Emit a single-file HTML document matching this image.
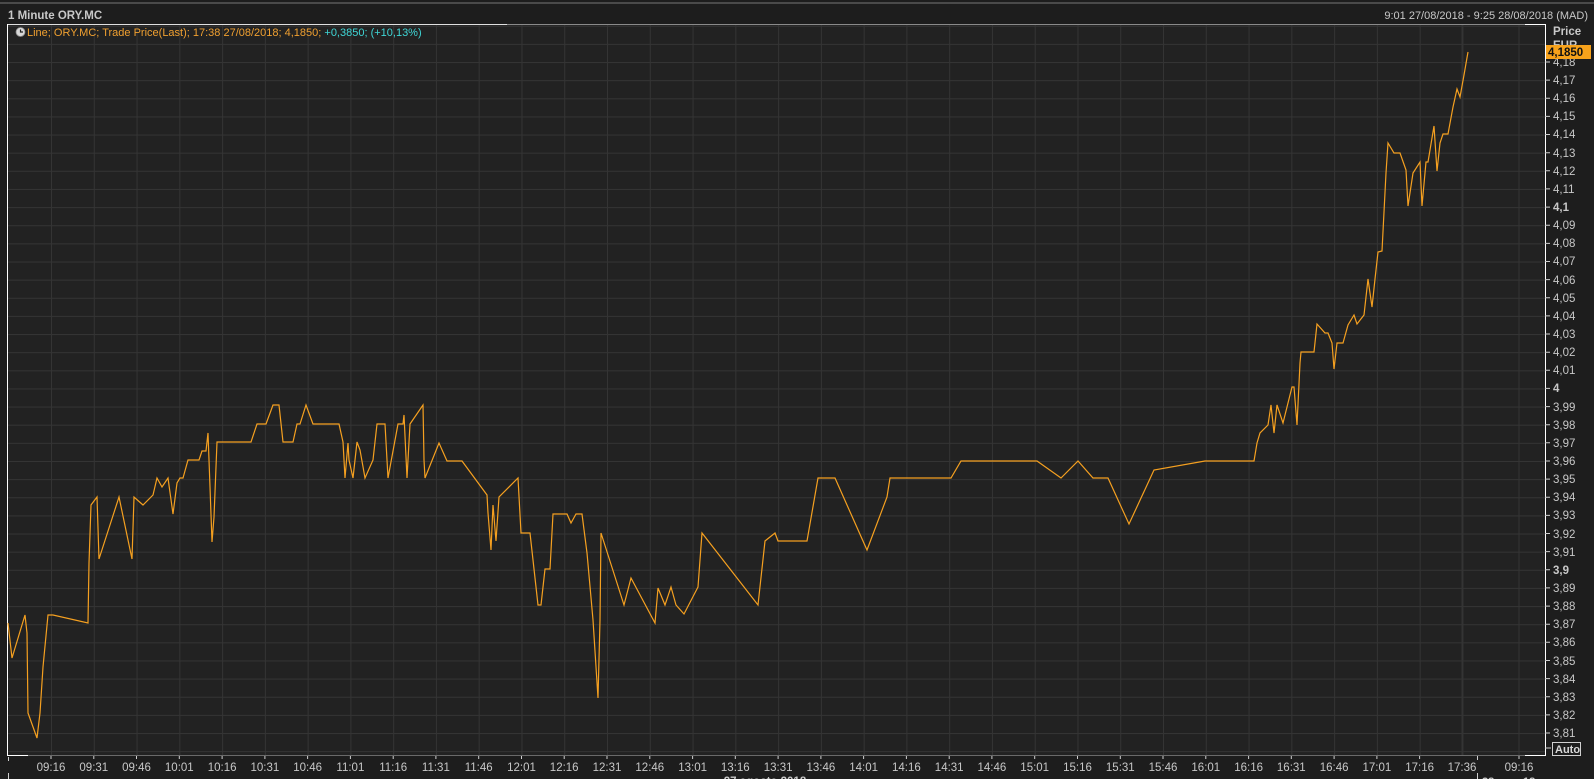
<!DOCTYPE html>
<html><head><meta charset="utf-8"><style>
html,body{margin:0;padding:0;background:#1d1d1d;width:1594px;height:779px;overflow:hidden}
svg{display:block}
text{font-family:"Liberation Sans",sans-serif}
</style></head><body>
<svg width="1594" height="779" viewBox="0 0 1594 779" xmlns="http://www.w3.org/2000/svg">
<defs>
<pattern id="hg" x="0" y="7.6" width="10" height="18.135" patternUnits="userSpaceOnUse"><rect x="0" y="0" width="10" height="1" fill="#343434"/></pattern>
<pattern id="vg" x="8.23" y="0" width="42.77" height="10" patternUnits="userSpaceOnUse"><rect x="0" y="0" width="1" height="10" fill="#343434"/></pattern>
</defs>
<rect x="0" y="0" width="1594" height="779" fill="#1d1d1d"/>
<rect x="0" y="2" width="1594" height="2" fill="#4a4a4a"/>
<rect x="8" y="25" width="1537" height="730" fill="#222222"/>
<rect x="8" y="25" width="1537" height="730" fill="url(#hg)"/>
<rect x="50" y="25" width="1420" height="730" fill="url(#vg)"/>
<rect x="1461.5" y="25" width="1" height="730" fill="#343434"/>
<rect x="1518.5" y="25" width="1" height="730" fill="#343434"/>
<!-- frame -->
<rect x="7" y="24" width="1539" height="1" fill="#8a8a8a"/>
<rect x="7" y="24" width="500" height="1" fill="#e0e0e0"/>
<rect x="1525" y="24" width="21" height="1" fill="#ffffff"/>
<rect x="7" y="24" width="1" height="732" fill="#ffffff"/>
<rect x="8" y="755" width="1537" height="1" fill="#6a6a6a"/>
<rect x="7" y="755" width="21" height="1" fill="#ffffff"/>
<rect x="1525" y="755" width="21" height="1" fill="#ffffff"/>
<rect x="1545" y="24" width="1" height="732" fill="#ffffff"/>
<!-- header -->
<text x="8" y="19" font-size="11.5" font-weight="bold" fill="#c8c8c8">1 Minute ORY.MC</text>
<text x="1588" y="19" font-size="11" fill="#c8c8c8" text-anchor="end">9:01 27/08/2018 - 9:25 28/08/2018 (MAD)</text>
<circle cx="20.5" cy="32" r="4.5" fill="#d8d8d8" stroke="#888" stroke-width="0.8"/>
<path d="M20.5 29.5V32H23" stroke="#222" stroke-width="1.2" fill="none"/>
<text x="27" y="36" font-size="11" fill="#f0a030">Line; ORY.MC; Trade Price(Last);  17:38 27/08/2018;  4,1850; <tspan fill="#3fd6d6">+0,3850;  (+10,13%)</tspan></text>
<!-- price line -->
<polyline fill="none" stroke="#f5a020" stroke-width="1.2" stroke-linejoin="miter" points="8,623 12,658 25,615 27,633 28,713 37,738 40,713 43,667 48,615 53,615 88,623 89,563 91,505 97,497 99,559 119,497 132,559 134,497 143,505 153,495 157,478 162,487 168,478 173,514 177,483 180,478 183,478 188,460 199,460 202,451 206,451 208,433 210,487 212,542 214,517 217,442 251,442 257,424 266,424 273,405 279,405 283,442 293,442 297,424 300,424 306,405 313,424 339,424 343,442 345,478 348,443 349,460 353,478 357,442 360,450 365,478 373,460 377,424 385,424 388,478 398,424 403,424 404,415 407,478 410,424 423,405 424,460 425,478 439,443 447,461 462,461 487,495 488,513 491,550 493,505 496,541 499,497 518,478 521,533 530,533 538,605 541,605 545,569 550,569 553,514 567,514 571,523 576,514 582,514 587,553 593,620 598,698 600,620 601,533 624,605 631,578 655,623 658,588 665,605 671,587 676,605 684,614 698,587 702,533 758,605 765,541 775,533 778,541 807,541 818,478 835,478 867,550 887,497 890,478 951,478 961,461 1037,461 1061,478 1078,461 1093,478 1108,478 1129,524 1154,470 1205,461 1254,461 1257,443 1260,433 1268,425 1271,405 1274,433 1277,405 1283,423 1292,387 1294,387 1297,425 1300,363 1301,352 1314,352 1317,324 1325,333 1328,333 1332,343 1334,369 1337,343 1343,343 1348,325 1354,315 1357,324 1364,315 1368,279 1372,307 1375,279 1378,252 1382,251 1384,212 1386,173 1388,143 1394,153 1400,153 1406,170 1408,206 1413,173 1420,162 1422,206 1426,162 1428,162 1434,126 1437,171 1440,143 1443,134 1448,134 1453,107 1457,89 1460,97 1464,75 1468,52"/>
<!-- right axis -->
<g font-size="11" fill="#c8c8c8">
<text x="1553" y="35" font-weight="bold" font-size="11.5">Price</text>
<text x="1553" y="49" font-weight="bold" font-size="11.5">EUR</text>
</g>
<g stroke="#cfcfcf" stroke-width="1">
<path d="M1545 62h5M1545 80.1h5M1545 98.3h5M1545 116.4h5M1545 134.5h5M1545 152.7h5M1545 170.8h5M1545 188.9h5M1545 207.1h5M1545 225.2h5M1545 243.4h5M1545 261.5h5M1545 279.6h5M1545 297.8h5M1545 315.9h5M1545 334h5M1545 352.2h5M1545 370.3h5M1545 388.4h5M1545 406.6h5M1545 424.7h5M1545 442.8h5M1545 461h5M1545 479.1h5M1545 497.2h5M1545 515.4h5M1545 533.5h5M1545 551.6h5M1545 569.8h5M1545 587.9h5M1545 606.1h5M1545 624.2h5M1545 642.3h5M1545 660.5h5M1545 678.6h5M1545 696.7h5M1545 714.9h5M1545 733h5M1545 748h6"/>
</g>
<g font-size="11.5" fill="#c8c8c8">
<text x="1553" y="66">4,18</text><text x="1553" y="84">4,17</text><text x="1553" y="102">4,16</text><text x="1553" y="120">4,15</text><text x="1553" y="138">4,14</text><text x="1553" y="157">4,13</text><text x="1553" y="175">4,12</text><text x="1553" y="193">4,11</text><text x="1553" y="211" font-weight="bold">4,1</text><text x="1553" y="229">4,09</text><text x="1553" y="247">4,08</text><text x="1553" y="265">4,07</text><text x="1553" y="284">4,06</text><text x="1553" y="302">4,05</text><text x="1553" y="320">4,04</text><text x="1553" y="338">4,03</text><text x="1553" y="356">4,02</text><text x="1553" y="374">4,01</text><text x="1553" y="392" font-weight="bold">4</text><text x="1553" y="411">3,99</text><text x="1553" y="429">3,98</text><text x="1553" y="447">3,97</text><text x="1553" y="465">3,96</text><text x="1553" y="483">3,95</text><text x="1553" y="501">3,94</text><text x="1553" y="519">3,93</text><text x="1553" y="538">3,92</text><text x="1553" y="556">3,91</text><text x="1553" y="574" font-weight="bold">3,9</text><text x="1553" y="592">3,89</text><text x="1553" y="610">3,88</text><text x="1553" y="628">3,87</text><text x="1553" y="646">3,86</text><text x="1553" y="665">3,85</text><text x="1553" y="683">3,84</text><text x="1553" y="701">3,83</text><text x="1553" y="719">3,82</text><text x="1553" y="737">3,81</text>
</g>
<rect x="1546" y="45" width="45" height="14" fill="#f7a21b"/>
<text x="1548" y="56" font-size="11.5" font-weight="bold" fill="#111">4,1850</text>
<rect x="1552.5" y="742.5" width="28" height="13" fill="#1d1d1d" stroke="#d0d0d0" stroke-width="1"/>
<text x="1555" y="753" font-size="11" font-weight="bold" fill="#d8d8d8">Auto</text>
<!-- bottom axis -->
<g stroke="#cfcfcf" stroke-width="1">
<path d="M8.5 757v4M51 756v3M93.8 756v3M136.5 756v3M179.3 756v3M222.1 756v3M264.9 756v3M307.6 756v3M350.4 756v3M393.2 756v3M435.9 756v3M478.7 756v3M521.5 756v3M564.2 756v3M607 756v3M649.8 756v3M692.6 756v3M735.3 756v3M778.1 756v3M820.9 756v3M863.6 756v3M906.4 756v3M949.2 756v3M991.9 756v3M1034.7 756v3M1077.5 756v3M1120.3 756v3M1163 756v3M1205.8 756v3M1248.6 756v3M1291.3 756v3M1334.1 756v3M1376.9 756v3M1419.6 756v3M1519 756v3M1477.5 756v4M1477.5 773v6M8.5 773v6"/>
</g>
<g font-size="11.5" fill="#c8c8c8" text-anchor="middle">
<text x="51" y="771">09:16</text><text x="93.8" y="771">09:31</text><text x="136.5" y="771">09:46</text><text x="179.3" y="771">10:01</text><text x="222.1" y="771">10:16</text><text x="264.9" y="771">10:31</text><text x="307.6" y="771">10:46</text><text x="350.4" y="771">11:01</text><text x="393.2" y="771">11:16</text><text x="435.9" y="771">11:31</text><text x="478.7" y="771">11:46</text><text x="521.5" y="771">12:01</text><text x="564.2" y="771">12:16</text><text x="607" y="771">12:31</text><text x="649.8" y="771">12:46</text><text x="692.6" y="771">13:01</text><text x="735.3" y="771">13:16</text><text x="778.1" y="771">13:31</text><text x="820.9" y="771">13:46</text><text x="863.6" y="771">14:01</text><text x="906.4" y="771">14:16</text><text x="949.2" y="771">14:31</text><text x="991.9" y="771">14:46</text><text x="1034.7" y="771">15:01</text><text x="1077.5" y="771">15:16</text><text x="1120.3" y="771">15:31</text><text x="1163" y="771">15:46</text><text x="1205.8" y="771">16:01</text><text x="1248.6" y="771">16:16</text><text x="1291.3" y="771">16:31</text><text x="1334.1" y="771">16:46</text><text x="1376.9" y="771">17:01</text><text x="1419.6" y="771">17:16</text><text x="1462" y="771">17:36</text><text x="1519" y="771">09:16</text>
<text x="765" y="785" font-weight="bold">27 agosto 2018</text>
</g>
<text x="1482" y="785" font-size="11" font-weight="bold" fill="#c8c8c8">28 ago. 18</text>
</svg>
</body></html>
